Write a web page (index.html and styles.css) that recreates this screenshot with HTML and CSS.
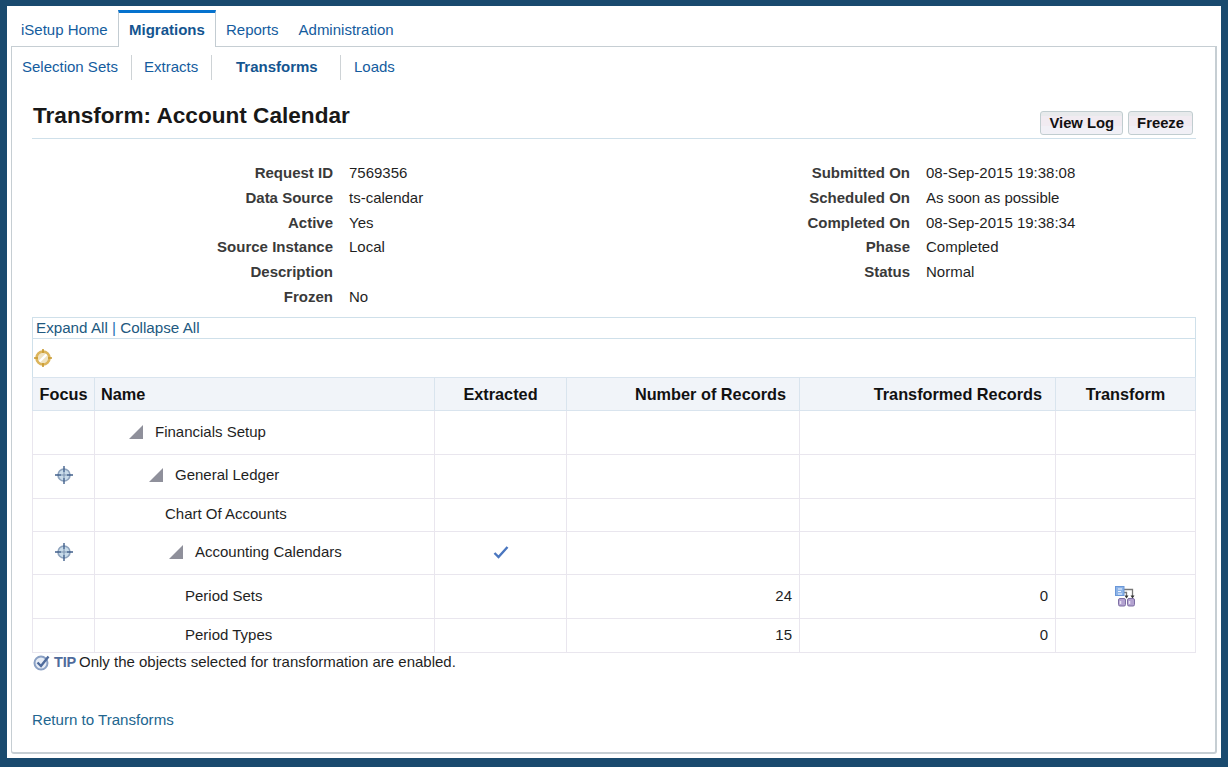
FILE: index.html
```html
<!DOCTYPE html>
<html lang="en">
<head>
<meta charset="utf-8">
<title>Transform: Account Calendar</title>
<link rel="stylesheet" href="styles.css">
</head>
<body>
<div class="page">
  <nav class="tabs">
    <a class="tab">iSetup Home</a>
    <a class="tab active">Migrations</a>
    <a class="tab">Reports</a>
    <a class="tab admin">Administration</a>
  </nav>
  <div class="panel">
    <nav class="subtabs">
      <a class="sub s1">Selection Sets</a>
      <a class="sub s2">Extracts</a>
      <a class="sub s3 current">Transforms</a>
      <a class="sub s4">Loads</a>
    </nav>
    <main class="content">
      <header class="title-row">
        <h1>Transform: Account Calendar</h1>
        <div class="actions">
          <button class="btn">View Log</button>
          <button class="btn">Freeze</button>
        </div>
      </header>
      <section class="details">
        <dl class="col col-left">
          <dt>Request ID</dt><dd>7569356</dd>
          <dt>Data Source</dt><dd>ts-calendar</dd>
          <dt>Active</dt><dd>Yes</dd>
          <dt>Source Instance</dt><dd>Local</dd>
          <dt>Description</dt><dd></dd>
          <dt>Frozen</dt><dd>No</dd>
        </dl>
        <dl class="col col-right">
          <dt>Submitted On</dt><dd>08-Sep-2015 19:38:08</dd>
          <dt>Scheduled On</dt><dd>As soon as possible</dd>
          <dt>Completed On</dt><dd>08-Sep-2015 19:38:34</dd>
          <dt>Phase</dt><dd>Completed</dd>
          <dt>Status</dt><dd>Normal</dd>
        </dl>
      </section>
      <div class="tree-links"><a>Expand All</a> <span class="sep">|</span> <a>Collapse All</a></div>
      <div class="tree-tools">
        <svg class="ico-target" width="20" height="20" viewBox="0 0 20 20">
          <circle cx="10" cy="10" r="6.500" fill="#efe3c2" stroke="#dcb55c" stroke-width="2.600"/>
          <path d="M6.500 13.500 13.500 6.500" stroke="#fff" stroke-width="2.400"/>
          <path d="M10 1v4M10 15v4M1 10h4M15 10h4" stroke="#c8992f" stroke-width="1.600"/>
        </svg>
      </div>
      <table class="grid">
        <colgroup>
          <col class="c1"><col class="c2"><col class="c3"><col class="c4"><col class="c5"><col class="c6">
        </colgroup>
        <thead>
          <tr class="h">
            <th class="ctr">Focus</th>
            <th class="lft">Name</th>
            <th class="ctr">Extracted</th>
            <th class="rgt">Number of Records</th>
            <th class="rgt">Transformed Records</th>
            <th class="ctr">Transform</th>
          </tr>
        </thead>
        <tbody>
          <tr class="r1">
            <td></td>
            <td><div class="node n0"><svg class="tri" width="14" height="14" viewBox="0 0 14 14"><path d="M14 0V14H0Z" fill="#8f909b"/></svg>Financials Setup</div></td>
            <td></td><td></td><td></td><td></td>
          </tr>
          <tr class="r2">
            <td class="ctr"><svg class="focus" width="20" height="20" viewBox="0 0 20 20"><circle cx="10" cy="10" r="6" fill="#c9dcea" stroke="#8ea3bd" stroke-width="1.600"/><path d="M10 1v6M10 13v6M1 10h6M13 10h6" stroke="#41608c" stroke-width="1.400"/><path d="M10 7v6M7 10h6" stroke="#7d94b0"/></svg></td>
            <td><div class="node n1"><svg class="tri" width="14" height="14" viewBox="0 0 14 14"><path d="M14 0V14H0Z" fill="#8f909b"/></svg>General Ledger</div></td>
            <td></td><td></td><td></td><td></td>
          </tr>
          <tr class="r3">
            <td></td>
            <td><div class="leaf l1">Chart Of Accounts</div></td>
            <td></td><td></td><td></td><td></td>
          </tr>
          <tr class="r4">
            <td class="ctr"><svg class="focus" width="20" height="20" viewBox="0 0 20 20"><circle cx="10" cy="10" r="6" fill="#c9dcea" stroke="#8ea3bd" stroke-width="1.600"/><path d="M10 1v6M10 13v6M1 10h6M13 10h6" stroke="#41608c" stroke-width="1.400"/><path d="M10 7v6M7 10h6" stroke="#7d94b0"/></svg></td>
            <td><div class="node n2"><svg class="tri" width="14" height="14" viewBox="0 0 14 14"><path d="M14 0V14H0Z" fill="#8f909b"/></svg>Accounting Calendars</div></td>
            <td class="ctr"><svg class="check" width="16" height="14" viewBox="0 0 16 14"><path d="M1.500 8 5.500 12 14.500 2" fill="none" stroke="#4a76bf" stroke-width="2.400"/></svg></td>
            <td></td><td></td><td></td>
          </tr>
          <tr class="r5">
            <td></td>
            <td><div class="leaf l2">Period Sets</div></td>
            <td></td>
            <td class="num">24</td>
            <td class="num">0</td>
            <td class="ctr"><svg class="flow" width="21" height="22" viewBox="0 0 21 22">
              <path d="M9 4.500h8.500V11M9 7.500h2.500V11" fill="none" stroke="#777" stroke-width="1.300"/>
              <path d="M9.500 10.500h4l-2 3zM15.500 10.500h4l-2 3z" fill="#333"/>
              <rect x="0.500" y="1.500" width="8.500" height="9" fill="#8db4e8" stroke="#6a97d8"/>
              <path d="M3 4h4M3 6.500h3M3 9h4" stroke="#eef4ff"/>
              <rect x="3.500" y="13.500" width="7" height="7.500" rx="1.500" fill="#b3a2d0" stroke="#7d6ea3"/>
              <rect x="12.500" y="13.500" width="7" height="7.500" rx="1.500" fill="#b3a2d0" stroke="#7d6ea3"/>
              <path d="M5.500 16v3M14.500 16v3" stroke="#e8e2f2" stroke-width="1.500"/>
            </svg></td>
          </tr>
          <tr class="r6">
            <td></td>
            <td><div class="leaf l2">Period Types</div></td>
            <td></td>
            <td class="num">15</td>
            <td class="num">0</td>
            <td></td>
          </tr>
        </tbody>
      </table>
      <p class="tip">
        <svg class="tip-ico" width="18" height="17" viewBox="0 0 18 17">
          <circle cx="8" cy="9" r="6.500" fill="#e6ecf5" stroke="#8aa0c4" stroke-width="2"/>
          <path d="M4.500 8.500 8 12 15.500 2.500" fill="none" stroke="#4f6b9c" stroke-width="2.400"/>
        </svg>
        <b>TIP</b>
        <span>Only the objects selected for transformation are enabled.</span>
      </p>
      <a class="return">Return to Transforms</a>
    </main>
  </div>
</div>
</body>
</html>
```
FILE: styles.css
```css
html, body { margin: 0; padding: 0; }
body {
  width: 1228px;
  height: 767px;
  overflow: hidden;
  box-sizing: border-box;
  padding: 6px 7px 9px 7px;
  background: #194a6e;
  font-family: "Liberation Sans", Arial, sans-serif;
  font-size: 15px;
  color: #1f1f1f;
}
.page {
  height: 752px;
  background: #fff;
  padding: 4px 4px 4px 4px;
  box-sizing: border-box;
  display: flex;
  flex-direction: column;
}
a { color: #145c9e; }

.tabs {
  display: flex;
  height: 37px;
  padding-left: 1px;
  box-sizing: border-box;
  position: relative;
  z-index: 1;
}
.tab {
  padding: 11px 9px 0 9px;
  line-height: 18px;
  margin-right: 1px;
}
.tab.admin { margin-left: 1px; }
.tab:first-child { width: 87px; padding-left: 9px; padding-right: 0; margin-right: 10px; }
.tab.active {
  font-weight: bold;
  color: #145590;
  background: #fff;
  border-top: 3px solid #0572ce;
  border-left: 1px solid #c3ccd2;
  border-right: 1px solid #c3ccd2;
  padding: 8px 10px 0 10px;
  height: 37px;
  box-sizing: border-box;
  width: 98px;
  margin-right: 1px;
}
.panel {
  flex: 1;
  min-height: 0;
  margin-top: -1px;
  border: 1px solid #c6ced3;
  border-width: 1px 2px 2px 1px;
  border-radius: 0 0 3px 3px;
  display: flex;
  flex-direction: column;
}
.subtabs {
  display: flex;
  align-items: flex-end;
  height: 33px;
  margin-bottom: 1px;
}
.sub {
  height: 25px;
  line-height: 23px;
  border-right: 1px solid #ced3d6;
  box-sizing: content-box;
}
.s1 { padding-left: 10px; width: 109px; }
.s2 { padding-left: 12px; width: 67px; }
.s3 { padding-left: 24px; width: 104px; }
.s4 { padding-left: 13px; border-right: 0; }
.current { font-weight: bold; color: #145590; }

.content {
  flex: 1;
  padding: 0 19px 0 20px;
  display: flex;
  flex-direction: column;
}
.title-row {
  height: 58px;
  box-sizing: border-box;
  border-bottom: 1px solid #cfe0ea;
  display: flex;
  justify-content: space-between;
  padding-left: 1px;
}
h1 {
  margin: 22px 0 0 0;
  font-size: 22.600px;
  line-height: 26px;
  color: #181818;
}
.actions {
  display: flex;
  gap: 5px;
  padding: 30px 3px 0 0;
}
.btn {
  height: 24px;
  padding: 0 8px;
  border: 1px solid #c1cdd0;
  border-radius: 3px;
  background: linear-gradient(#e8eaec 0 20%, #f1ebf1 20% 65%, #f1f0f6 65%);
  font: bold 14.800px "Liberation Sans", Arial, sans-serif;
  color: #111;
}
.details {
  display: flex;
  height: 178px;
  box-sizing: border-box;
  padding-top: 22px;
}
.col {
  margin: 0;
  display: grid;
  grid-auto-rows: 24.800px;
  align-content: start;
  line-height: 24.800px;
}
.col dt { font-weight: bold; color: #3a3a3a; text-align: right; }
.col dd { margin: 0; color: #1f1f1f; }
.col-left { grid-template-columns: 301px 1fr; column-gap: 16px; width: 578px; }
.col-right { grid-template-columns: 300px 1fr; column-gap: 16px; flex: 1; }

.tree-links {
  height: 21px;
  line-height: 20px;
  border: 1px solid #cfe0ea;
  border-bottom: 0;
  padding-left: 3px;
  box-sizing: border-box;
  font-size: 15.200px;
}
.tree-links a { color: #22597f; }
.sep { color: #1f6fb5; }
.tree-tools {
  height: 39px;
  box-sizing: border-box;
  border: 1px solid #cfe0ea;
  border-bottom: 0;
  padding: 9px 0 0 0;
}
.ico-target { display: block; }
.grid {
  width: 1163px;
  table-layout: fixed;
  border-collapse: collapse;
}
.c1 { width: 62px; }
.c2 { width: 340px; }
.c3 { width: 132px; }
.c4 { width: 233px; }
.c5 { width: 256px; }
.c6 { width: 140px; }
.grid th {
  height: 33px;
  padding: 0 6px;
  background: #f1f4f9;
  border: 1px solid #d9e4ee;
  font-size: 16.300px;
  line-height: 18px;
  color: #111;
  box-sizing: border-box;
}
.grid th.rgt { padding-right: 13px; }
.lft { text-align: left; }
.ctr { text-align: center; }
.rgt { text-align: right; }
.grid td {
  border: 1px solid #e9e6ee;
  padding: 0 0 2px 0;
  box-sizing: border-box;
  vertical-align: middle;
  line-height: 18px;
}
.grid td.num { text-align: right; padding-right: 7px; }
.grid td svg { display: block; margin: 0 auto; }
.grid .node svg.tri { margin: 0; flex: none; }
.r1 td { height: 44px; }
.r2 td { height: 44px; padding-bottom: 4px; }
.r3 td { height: 33px; }
.r4 td { height: 43px; }
.r5 td { height: 44px; }
.r6 td { height: 34px; }
.node { display: flex; align-items: center; gap: 12px; }
.n0 { padding-left: 34px; }
.n1 { padding-left: 54px; }
.n2 { padding-left: 74px; }
.leaf.l1 { padding-left: 70px; }
.leaf.l2 { padding-left: 90px; }
.tip {
  margin: 0;
  height: 20px;
  padding: 0 0 2px 1px;
  box-sizing: border-box;
  line-height: 18px;
  display: flex;
  align-items: center;
}
.tip-ico { flex: none; margin-right: 3px; }
.tip b { color: #4f6b9c; margin-right: 3px; font-size: 14.500px; letter-spacing: -0.200px; }
.return {
  margin-top: 38px;
  line-height: 18px;
  font-size: 15.100px;
  color: #22668f;
}
```
